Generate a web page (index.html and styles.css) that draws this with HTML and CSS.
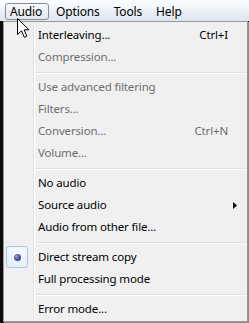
FILE: index.html
```html
<!DOCTYPE html>
<html>
<head>
<meta charset="utf-8">
<link rel="stylesheet" href="styles.css">
</head>
<body>
<div class="screen">
  <div class="menubar">
    <span class="mb-item active">Audio</span>
    <span class="mb-item">Options</span>
    <span class="mb-item">Tools</span>
    <span class="mb-item">Help</span>
  </div>
  <div class="popup">
    <div class="item"><span class="check"></span><span class="label">Interleaving...</span><span class="key">Ctrl+I</span><span class="sub"></span></div>
    <div class="item disabled"><span class="check"></span><span class="label">Compression...</span><span class="key"></span><span class="sub"></span></div>
    <div class="sep"></div>
    <div class="item disabled"><span class="check"></span><span class="label">Use advanced filtering</span><span class="key"></span><span class="sub"></span></div>
    <div class="item disabled"><span class="check"></span><span class="label">Filters...</span><span class="key"></span><span class="sub"></span></div>
    <div class="item disabled"><span class="check"></span><span class="label">Conversion...</span><span class="key">Ctrl+N</span><span class="sub"></span></div>
    <div class="item disabled"><span class="check"></span><span class="label">Volume...</span><span class="key"></span><span class="sub"></span></div>
    <div class="sep"></div>
    <div class="item"><span class="check"></span><span class="label">No audio</span><span class="key"></span><span class="sub"></span></div>
    <div class="item"><span class="check"></span><span class="label">Source audio</span><span class="key"></span><span class="sub"><svg width="4" height="7" viewBox="0 0 4 7"><path d="M0 0 L4 3.5 L0 7 Z" fill="#000"/></svg></span></div>
    <div class="item"><span class="check"></span><span class="label">Audio from other file...</span><span class="key"></span><span class="sub"></span></div>
    <div class="sep"></div>
    <div class="item"><span class="check"><span class="radio-box"><span class="dot"></span></span></span><span class="label">Direct stream copy</span><span class="key"></span><span class="sub"></span></div>
    <div class="item"><span class="check"></span><span class="label">Full processing mode</span><span class="key"></span><span class="sub"></span></div>
    <div class="sep"></div>
    <div class="item"><span class="check"></span><span class="label">Error mode...</span><span class="key"></span><span class="sub"></span></div>
  </div>
  <svg class="cursor" width="14" height="21" viewBox="0 0 14 21"><path d="M0.5 0.5 L0.5 16.5 L4.5 12.8 L7.3 19.3 L9.8 18.2 L7.1 11.8 L12 11.8 Z" fill="#fff" stroke="#000" stroke-width="1" stroke-linejoin="miter"/></svg>
</div>
</body>
</html>
```
FILE: styles.css
```css
html, body {
  margin: 0;
  padding: 0;
}
body {
  background: #0c0c0c;
  font-family: "Noto Sans", "Open Sans", sans-serif;
  font-size: 11.5px;
  letter-spacing: -0.15px;
  color: #000;
  width: 249px;
  height: 323px;
  overflow: hidden;
}
.screen {
  position: relative;
  display: flex;
  flex-direction: column;
  width: 249px;
  height: 323px;
}
.menubar {
  height: 21px;
  box-sizing: border-box;
  display: flex;
  align-items: flex-start;
  padding: 3px 0 0 5px;
  background: linear-gradient(to bottom, #fbfcfd 0%, #f4f7fa 35%, #e8eef5 55%, #dfe6f0 100%);
}
.mb-item {
  height: 17px;
  line-height: 16px;
  font-size: 12px;
  box-sizing: border-box;
  border: 1px solid transparent;
  border-radius: 3px;
  padding: 0 6px 0 4px;
  margin-right: 2px;
}
.mb-item.active {
  border-color: #8a8e94;
  background: linear-gradient(to bottom, #f7f8fa, #e4e8ee);
}
.popup {
  margin-left: 3px;
  width: 245px;
  height: 301px;
  box-sizing: border-box;
  border: 1px solid #979797;
  box-shadow: 1px 1px 0 #8c8c8c;
  padding-top: 2px;
  display: flex;
  flex-direction: column;
  background: linear-gradient(to right, #f0f0f0 29px, #e2e3e3 29px, #e2e3e3 30px, #ffffff 30px, #ffffff 31px, #f0f0f0 31px);
}
.item {
  display: flex;
  align-items: center;
  height: 22px;
  line-height: 22px;
  white-space: nowrap;
}
.item.disabled {
  color: #6d6d6d;
}
.check {
  width: 34px;
  height: 22px;
  flex: none;
  display: flex;
  align-items: center;
}
.label {
  flex: 1;
}
.key {
  flex: none;
}
.sub {
  width: 19px;
  flex: none;
  display: flex;
  align-items: center;
  padding-left: 5px;
  box-sizing: border-box;
}
.sep {
  height: 8px;
  flex: none;
  box-sizing: border-box;
  margin: 0 1px 0 31px;
  padding-top: 4px;
}
.sep::before {
  content: "";
  display: block;
  height: 1px;
  background: #e0e0e0;
  border-bottom: 1px solid #ffffff;
}
.radio-box {
  margin-left: 2px;
  width: 22px;
  height: 22px;
  box-sizing: border-box;
  border: 1px solid #a8c3e6;
  border-radius: 3px;
  background: linear-gradient(to bottom, #f4f8fd, #e6eef9);
  display: flex;
  align-items: center;
  justify-content: center;
}
.dot {
  width: 7px;
  height: 7px;
  border-radius: 50%;
  background: radial-gradient(circle at 35% 35%, #9a9ad6 0%, #4b4b9c 55%, #2e2e78 100%);
}
.cursor {
  position: absolute;
  left: 17px;
  top: 18px;
}
```
